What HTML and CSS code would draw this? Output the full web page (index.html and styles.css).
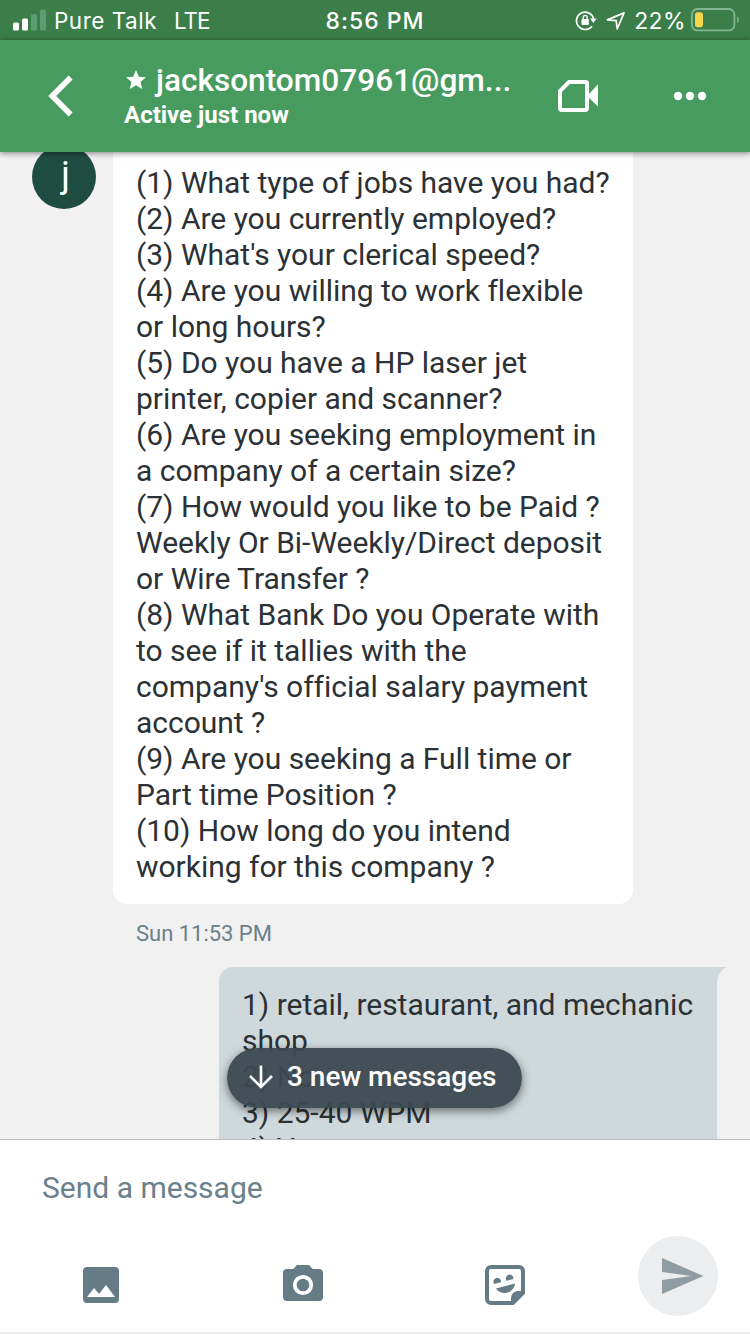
FILE: index.html
```
<!DOCTYPE html>
<html lang="en">
<head>
    <meta charset="UTF-8">
    <title>Chat</title>
    <link rel="stylesheet" href="styles.css">
</head>
<body>
    <div class="phone">
        <div class="status-bar">
            <div class="status-left">
                <svg class="signal" width="34" height="22" viewBox="0 0 34 22">
                    <rect x="0" y="13.5" width="6" height="8" rx="1.6" fill="#fff"/>
                    <rect x="9" y="9.5" width="6" height="12" rx="1.6" fill="#fff"/>
                    <rect x="18" y="5" width="6" height="16.5" rx="1.6" fill="#5a9e72"/>
                    <rect x="27" y="0.5" width="6" height="21" rx="1.6" fill="#5a9e72"/>
                </svg>
                <span class="carrier">Pure Talk</span>
                <span class="network">LTE</span>
            </div>
            <div class="clock">8:56 PM</div>
            <div class="status-right">
                <svg class="rotation" width="22" height="22" viewBox="0 0 22 22">
                    <path d="M17 17.2A8.7 8.7 0 1 1 18.6 9.700" fill="none" stroke="#fff" stroke-width="1.7"/>
                    <path d="M15 9.400h6.6l-3.3 4.6z" fill="#fff"/>
                    <rect x="6.5" y="9.900" width="7.4" height="6" rx="1" fill="#fff"/>
                    <path d="M8.2 10.500V8.500a2 2 0 0 1 4 0v2" fill="none" stroke="#fff" stroke-width="1.3"/>
                </svg>
                <svg class="location" width="20" height="20" viewBox="0 0 20 20">
                    <path d="M1.400 9.900L18 2.900 11.200 19 10.200 10.700z" fill="none" stroke="#fff" stroke-width="1.7" stroke-linejoin="round"/>
                </svg>
                <span class="percent">22%</span>
                <svg class="battery" width="50" height="24" viewBox="0 0 50 24">
                    <rect x="0.9" y="1" width="42.5" height="21.4" rx="5.4" fill="none" stroke="#84b591" stroke-width="1.8"/>
                    <rect x="4" y="4.2" width="8" height="15" rx="2.6" fill="#f7d64a"/>
                    <path d="M46.2 8.2q1.8 1 1.8 3.5t-1.8 3.5z" fill="#84b591"/>
                </svg>
            </div>
        </div>

        <div class="header">
            <svg class="back" width="28" height="42" viewBox="0 0 28 42">
                <path d="M23.6 2.5L5.2 21l18.4 18.5" fill="none" stroke="#fff" stroke-width="5.6"/>
            </svg>
            <div class="contact">
                <div class="contact-name">
                    <svg class="star" width="20" height="19" viewBox="2 2 20 19">
                        <path d="M12 17.27L18.18 21l-1.64-7.03L22 9.24l-7.19-.61L12 2 9.19 8.63 2 9.24l5.46 4.73L5.82 21z" fill="#fff"/>
                    </svg>
                    <span>jacksontom07961@gm...</span>
                </div>
                <div class="contact-state">Active just now</div>
            </div>
            <svg class="video" width="42" height="34" viewBox="0 0 42 34">
                <path d="M12 3h16.5a1.5 1.5 0 0 1 1.5 1.5v25a1.5 1.5 0 0 1-1.5 1.5H4.5A1.5 1.5 0 0 1 3 29.5V12z" fill="none" stroke="#fff" stroke-width="4"/>
                <path d="M31 16L41 5.5v22L31 18z" fill="#fff"/>
            </svg>
            <svg class="more" width="34" height="10" viewBox="0 0 34 10">
                <circle cx="5" cy="5" r="4.2" fill="#fff"/>
                <circle cx="17" cy="5" r="4.2" fill="#fff"/>
                <circle cx="29" cy="5" r="4.2" fill="#fff"/>
            </svg>
        </div>

        <div class="chat">
            <div class="row-in">
                <div class="avatar">j</div>
                <div class="bubble-in">
                    (1) What type of jobs have you had?<br>
                    (2) Are you currently employed?<br>
                    (3) What's your clerical speed?<br>
                    (4) Are you willing to work flexible<br>
                    or long hours?<br>
                    (5) Do you have a HP laser jet<br>
                    printer, copier and scanner?<br>
                    (6) Are you seeking employment in<br>
                    a company of a certain size?<br>
                    (7) How would you like to be Paid ?<br>
                    Weekly Or Bi-Weekly/Direct deposit<br>
                    or Wire Transfer ?<br>
                    (8) What Bank Do you Operate with<br>
                    to see if it tallies with the<br>
                    company's official salary payment<br>
                    account ?<br>
                    (9) Are you seeking a Full time or<br>
                    Part time Position ?<br>
                    (10) How long do you intend<br>
                    working for this company ?
                </div>
            </div>
            <div class="time">Sun 11:53 PM</div>
            <div class="bubble-out">
                1) retail, restaurant, and mechanic<br>
                shop<br>
                2) No<br>
                3) 25-40 WPM<br>
                4) Yes
                <svg class="tail" width="10" height="16" viewBox="0 0 10 16">
                    <path d="M0 0h9.5Q2 4 0 14z" fill="#cfd8db"/>
                </svg>
            </div>
            <div class="new-messages">
                <svg width="26" height="26" viewBox="0 0 26 26">
                    <path d="M13 1.5v21M2 12l11 11 11-11" fill="none" stroke="#fff" stroke-width="2.6"/>
                </svg>
                <span>3 new messages</span>
            </div>
        </div>

        <div class="compose">
            <div class="placeholder">Send a message</div>
            <div class="tools">
                <svg class="tool" width="48" height="48" viewBox="0 0 48 48">
                    <path d="M10 6h28a4 4 0 0 1 4 4v28a4 4 0 0 1-4 4H10a4 4 0 0 1-4-4V10a4 4 0 0 1 4-4zM10 36h28L29 24l-7 9-5-6z" fill="#657c87" fill-rule="evenodd"/>
                </svg>
                <svg class="tool" width="48" height="48" viewBox="0 0 48 48">
                    <path d="M18 4L14.3 8H8a4 4 0 0 0-4 4v24a4 4 0 0 0 4 4h32a4 4 0 0 0 4-4V12a4 4 0 0 0-4-4h-6.3L30 4z" fill="#657c87"/>
                    <circle cx="24" cy="24" r="8.2" fill="none" stroke="#fff" stroke-width="3.8"/>
                </svg>
                <svg class="tool" width="48" height="48" viewBox="0 0 48 48">
                    <path d="M10 6h28a4 4 0 0 1 4 4v21.9L31.9 42H10a4 4 0 0 1-4-4V10a4 4 0 0 1 4-4z" fill="none" stroke="#657c87" stroke-width="4"/>
                    <path d="M30 43v-6a7 7 0 0 1 7-7h6v3L33 43z" fill="#657c87"/>
                    <path d="M13.3 23a3.8 3.8 0 1 1 6.7-1.8zM25.600 19.800a3.800 3.800 0 1 1 6.700-1.800zM15 27.500L34 22.500C33.500 28 29 31.700 24.500 32 20.500 32.200 16.800 30.500 15 27.500z" fill="#657c87"/>
                </svg>
                <div class="send">
                    <svg width="48" height="48" viewBox="0 0 24 24">
                        <path d="M2 21l20.7-9L2 3v7l14.5 2L2 14z" fill="#8f9da2"/>
                    </svg>
                </div>
            </div>
        </div>
    </div>
</body>
</html>
```
FILE: styles.css
```
body {
    margin: 0;
    font-family: Roboto, "Liberation Sans", sans-serif;
    background-color: #fff;
}

svg {
    display: block;
    flex-shrink: 0;
}

.phone {
    width: 750px;
    height: 1334px;
    display: flex;
    flex-direction: column;
    overflow: hidden;
}

/* status bar */
.status-bar {
    display: grid;
    grid-template-columns: 1fr auto 1fr;
    align-items: center;
    height: 40px;
    flex-shrink: 0;
    box-sizing: border-box;
    padding: 0 10px 0 13px;
    background-color: #3b7e49;
    color: #fff;
    font-family: Inter, "Liberation Sans", sans-serif;
    font-size: 22.5px;
    white-space: nowrap;
}

.status-left, .status-right {
    display: flex;
    align-items: center;
}

.status-right {
    justify-content: flex-end;
}

.signal {
    margin-right: 7px;
}

.carrier {
    padding-top: 1px;
    letter-spacing: 0.5px;
}

.network {
    padding-top: 1px;
    margin-left: 17px;
    letter-spacing: -1px;
}

.clock {
    padding-top: 1px;
    margin-right: 3px;
    font-size: 23px;
    font-weight: 500;
    letter-spacing: 1px;
}

.location {
    margin: 0 8px 0 9px;
}

.percent {
    padding-top: 1px;
    font-size: 23px;
    letter-spacing: 0.4px;
}

.battery {
    margin-left: 5px;
    margin-right: -1px;
}

/* header */
.header {
    position: relative;
    z-index: 2;
    display: flex;
    align-items: center;
    height: 112px;
    flex-shrink: 0;
    box-sizing: border-box;
    padding-left: 47px;
    background-color: #489b5f;
    color: #fff;
    box-shadow: 0 1px 6px rgba(0, 0, 0, 0.5);
}

.contact {
    width: 400px;
    margin-left: 49px;
}

.contact-name {
    display: flex;
    align-items: center;
    gap: 10px;
    padding-left: 2px;
    font-size: 31.6px;
    font-weight: 500;
    line-height: 38px;
    white-space: nowrap;
}

.star {
    margin-top: -3px;
}

.contact-state {
    font-size: 24px;
    font-weight: 700;
    line-height: 30px;
}

.video {
    margin-left: 33px;
}

.more {
    margin-left: 74px;
}

/* messages */
.chat {
    position: relative;
    height: 987px;
    flex-shrink: 0;
    overflow: hidden;
    background-color: #f1f1f1;
    color: #2b3135;
    font-size: 30px;
    line-height: 36px;
    letter-spacing: -0.02px;
    white-space: nowrap;
}

.row-in {
    display: flex;
    align-items: flex-start;
    padding-left: 32px;
}

.avatar {
    width: 64px;
    height: 64px;
    margin-top: -7px;
    margin-right: 17px;
    border-radius: 50%;
    background-color: #1f4c41;
    color: #fff;
    font-size: 36px;
    line-height: 60px;
    text-align: center;
    text-indent: 3px;
}

.bubble-in {
    width: 520px;
    box-sizing: border-box;
    padding: 13px 0 19px 23px;
    border-radius: 0 0 14px 14px;
    background-color: #fff;
}

.time {
    margin: 16px 0 0 136px;
    color: #6b808a;
    font-size: 22px;
    line-height: 28px;
}

.bubble-out {
    position: relative;
    width: 498px;
    height: 240px;
    box-sizing: border-box;
    margin: 19px 0 0 219px;
    padding: 20px 0 0 23px;
    border-radius: 14px 0 0 0;
    background-color: #cfd8db;
}

.tail {
    position: absolute;
    top: 0;
    left: 498px;
}

.new-messages {
    position: absolute;
    left: 227px;
    top: 896px;
    display: flex;
    align-items: center;
    width: 295px;
    height: 60px;
    box-sizing: border-box;
    padding: 0 0 2px 21px;
    gap: 13px;
    border-radius: 30px;
    background-color: rgba(60, 73, 80, 0.95);
    color: #fff;
    font-size: 28px;
    font-weight: 500;
    box-shadow: 0 3px 10px rgba(0, 0, 0, 0.5);
}

/* compose */
.compose {
    position: relative;
    z-index: 2;
    height: 195px;
    box-sizing: border-box;
    border-top: 1px solid #b9bdbe;
    border-bottom: 2px solid #eeefef;
    background-color: #fff;
}

.placeholder {
    margin: 30px 0 0 42px;
    color: #6b808a;
    font-size: 30px;
    line-height: 36px;
}

.tools {
    display: flex;
    align-items: center;
    height: 80px;
    margin-top: 30px;
    padding-left: 77px;
}

.tool {
    margin-top: 18px;
    margin-right: 154px;
}

.send {
    display: flex;
    align-items: center;
    justify-content: center;
    width: 80px;
    height: 80px;
    box-sizing: border-box;
    margin-left: -45px;
    padding-left: 8px;
    border-radius: 50%;
    background-color: #ecedef;
}
```
